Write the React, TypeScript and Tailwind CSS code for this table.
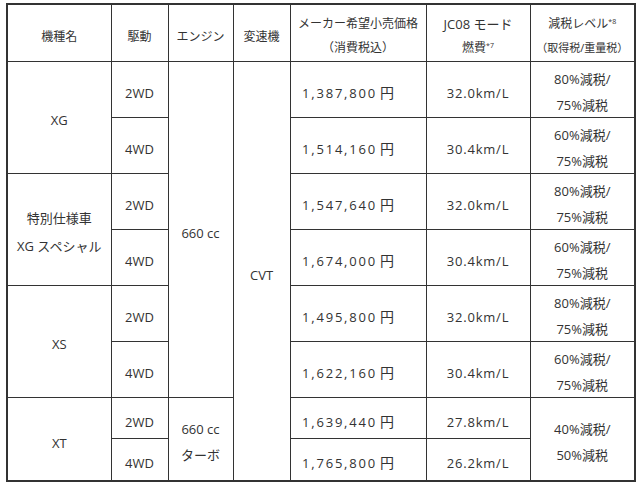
const rows = [
  { price: "1,387,800", fuel: "32.0km/L", tax: ["80%減税/", "75%減税"] },
  { price: "1,514,160", fuel: "30.4km/L", tax: ["60%減税/", "75%減税"] },
  { price: "1,547,640", fuel: "32.0km/L", tax: ["80%減税/", "75%減税"] },
  { price: "1,674,000", fuel: "30.4km/L", tax: ["60%減税/", "75%減税"] },
  { price: "1,495,800", fuel: "32.0km/L", tax: ["80%減税/", "75%減税"] },
  { price: "1,622,160", fuel: "30.4km/L", tax: ["60%減税/", "75%減税"] },
];

const models: Array<string[]> = [["XG"], ["特別仕様車", "XG スペシャル"], ["XS"]];

const cell = "border border-[#333] text-center align-middle p-0";
const latin = "text-[13px]";
const price = `${cell} ${latin} pr-5 tracking-[1.8px]`;
const fuel = `${cell} ${latin} tracking-[0.8px]`;

// content sits a few px below the cell centre in the original
function C({ children, shift = "translate-y-[4px]" }: { children: React.ReactNode; shift?: string }) {
  return <div className={shift}>{children}</div>;
}

function Lines({ lines, gap = "leading-[26px]" }: { lines: string[]; gap?: string }) {
  return (
    <div className={`${gap} translate-y-[3px]`}>
      {lines.map((l) => (
        <div key={l}>{l}</div>
      ))}
    </div>
  );
}

function Yen({ n }: { n: string }) {
  return (
    <C>
      {n}
      <span className="ml-[3px] text-[14px] tracking-normal">円</span>
    </C>
  );
}

export default function App() {
  return (
    <div className="w-[640px] h-[487px] bg-white pl-[6px] pt-[3px]">
      <table
        className="border-collapse table-fixed text-[12px] leading-[18px] text-[#333] border-2 border-[#333]"
        style={{ fontFamily: '"Open Sans", "Noto Sans CJK JP", sans-serif' }}
      >
        <colgroup>
          <col className="w-[104px]" />
          <col className="w-[57px]" />
          <col className="w-[65px]" />
          <col className="w-[57px]" />
          <col className="w-[136px]" />
          <col className="w-[104px]" />
          <col className="w-[105px]" />
        </colgroup>
        <tbody>
          <tr className="h-[57px]">
            <td className={cell}>
              <C>機種名</C>
            </td>
            <td className={cell}>
              <C>駆動</C>
            </td>
            <td className={cell}>
              <C>エンジン</C>
            </td>
            <td className={cell}>
              <C>変速機</C>
            </td>
            <td className={cell}>
              <Lines gap="leading-[24px]" lines={["メーカー希望小売価格", "（消費税込）"]} />
            </td>
            <td className={cell}>
              <div className="leading-[24px] translate-y-[3px]">
                <div className={latin}>JC08 モード</div>
                <div>
                  燃費<sup className="text-[7px]">*7</sup>
                </div>
              </div>
            </td>
            <td className={cell}>
              <div className="leading-[24px] translate-y-[3px]">
                <div>
                  減税レベル<sup className="text-[7px]">*8</sup>
                </div>
                <div className="text-[11px]">（取得税/重量税）</div>
              </div>
            </td>
          </tr>
          {rows.map((r, i) => (
            <tr key={r.price} className="h-[56px]">
              {i % 2 === 0 && (
                <td className={`${cell} text-[13px]`} rowSpan={2}>
                  <Lines gap="leading-[28px]" lines={models[i / 2]} />
                </td>
              )}
              <td className={`${cell} ${latin}`}>
                <C>{i % 2 === 0 ? "2WD" : "4WD"}</C>
              </td>
              {i === 0 && (
                <td className={`${cell} ${latin}`} rowSpan={6}>
                  <C>660 cc</C>
                </td>
              )}
              {i === 0 && (
                <td className={`${cell} ${latin}`} rowSpan={8}>
                  <C>CVT</C>
                </td>
              )}
              <td className={price}>
                <Yen n={r.price} />
              </td>
              <td className={fuel}>
                <C>{r.fuel}</C>
              </td>
              <td className={`${cell} text-[13px]`}>
                <Lines lines={r.tax} />
              </td>
            </tr>
          ))}
          <tr className="h-[41px]">
            <td className={`${cell} ${latin}`} rowSpan={2}>
              <C>XT</C>
            </td>
            <td className={`${cell} ${latin}`}>
              <C>2WD</C>
            </td>
            <td className={`${cell} text-[13px]`} rowSpan={2}>
              <Lines lines={["660 cc", "ターボ"]} />
            </td>
            <td className={price}>
              <Yen n="1,639,440" />
            </td>
            <td className={fuel}>
              <C>27.8km/L</C>
            </td>
            <td className={`${cell} text-[13px]`} rowSpan={2}>
              <Lines lines={["40%減税/", "50%減税"]} />
            </td>
          </tr>
          <tr className="h-[43px]">
            <td className={`${cell} ${latin}`}>
              <C>4WD</C>
            </td>
            <td className={price}>
              <Yen n="1,765,800" />
            </td>
            <td className={fuel}>
              <C>26.2km/L</C>
            </td>
          </tr>
        </tbody>
      </table>
    </div>
  );
}
